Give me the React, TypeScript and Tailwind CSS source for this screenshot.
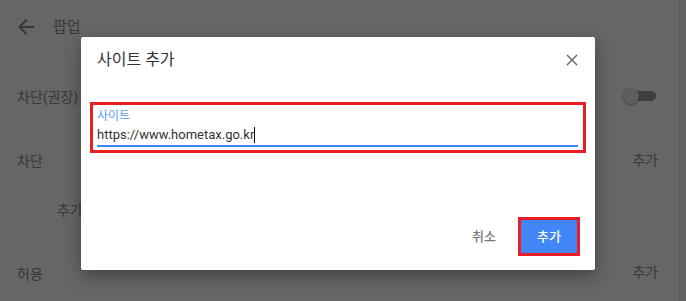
import React from "react";

const KR = { fontFamily: 'Roboto, "Noto Sans CJK KR", sans-serif' };

export default function App() {
  return (
    <div className="relative w-[686px] h-[301px] overflow-hidden bg-[#666666]" style={KR}>
      {/* background page (dimmed) */}
      <div className="flex h-full">
        <div className="flex-1 flex flex-col text-[#383838] text-[14px]">
          <div className="flex items-center h-[50px] pl-[14px] pt-[4px]">
            <svg width="24" height="24" viewBox="0 0 24 24" className="text-[#383838]">
              <path d="M20 11H7.83l5.59-5.59L12 4l-8 8 8 8 1.41-1.41L7.83 13H20v-2z" fill="currentColor" />
            </svg>
            <span className="ml-[15px] text-[15px]">팝업</span>
          </div>
          <div className="flex items-center justify-between h-[48px] pl-[17px] pr-[23px] mt-[23px]">
            <span>차단(권장)</span>
            <div className="relative w-[33px] h-[16px] flex items-center -mt-[2px]">
              <div className="absolute left-[6px] right-0 h-[10px] rounded-full bg-[#3e3e3e]" />
              <div className="absolute left-0 w-[16px] h-[16px] rounded-full bg-[#5e5e5e] shadow-[0_1px_2px_rgba(0,0,0,0.4)]" />
            </div>
          </div>
          <div className="flex items-center justify-between h-[24px] pl-[17px] pr-[21px] mt-[28px]">
            <span>차단</span>
            <span className="-mt-[2px]">추가</span>
          </div>
          <div className="flex items-center h-[24px] pl-[57px] mt-[25px]">
            <span>추가</span>
          </div>
          <div className="flex items-center justify-between h-[24px] pl-[17px] pr-[21px] mt-[40px]">
            <span>허용</span>
            <span className="-mt-[4px]">추가</span>
          </div>
        </div>
        <div className="w-[7px] h-full bg-[#626262] border-l border-[#5a5a5a]" />
      </div>

      {/* dialog */}
      <div className="absolute left-[81px] top-[37px] w-[514px] h-[233px] bg-white rounded-[2px] shadow-[0_6px_18px_rgba(0,0,0,0.35)] flex flex-col">
        <div className="flex items-center justify-between h-[44px] pl-[16px] pr-[16px] pt-[1px]">
          <span className="text-[16px] text-[#333333]">사이트 추가</span>
          <svg width="12" height="12" viewBox="0 0 12 12" className="mr-[1px]">
            <path d="M1 1L11 11M11 1L1 11" stroke="#6b6b6b" strokeWidth="1.5" />
          </svg>
        </div>
        <div className="mx-[9px] mt-[21px] h-[51px] border-[3px] border-[#ea1c24] px-[4px] flex flex-col">
          <span className="text-[12px] leading-[14px] text-[#5b9af5] mt-[4px]">사이트</span>
          <div className="flex items-center h-[21px] mt-[1px] text-[13px] text-[#333333] leading-[18px]">
            <span>https://www.hometax.go.kr</span>
            <span className="w-[1px] h-[16px] bg-[#111111]" />
          </div>
          <div className="h-[2px] bg-[#4285f4] mr-[1px]" />
        </div>
        <div className="flex-1" />
        <div className="flex items-center justify-end gap-[22px] pr-[15px] pb-[14px]">
          <span className="text-[13px] font-medium text-[#7a7a7a]">취소</span>
          <div className="w-[62px] h-[39px] border-[3px] border-[#ea1c24] flex items-center justify-center bg-[#4285f4]">
            <span className="text-[13px] font-medium text-white">추가</span>
          </div>
        </div>
      </div>
    </div>
  );
}
